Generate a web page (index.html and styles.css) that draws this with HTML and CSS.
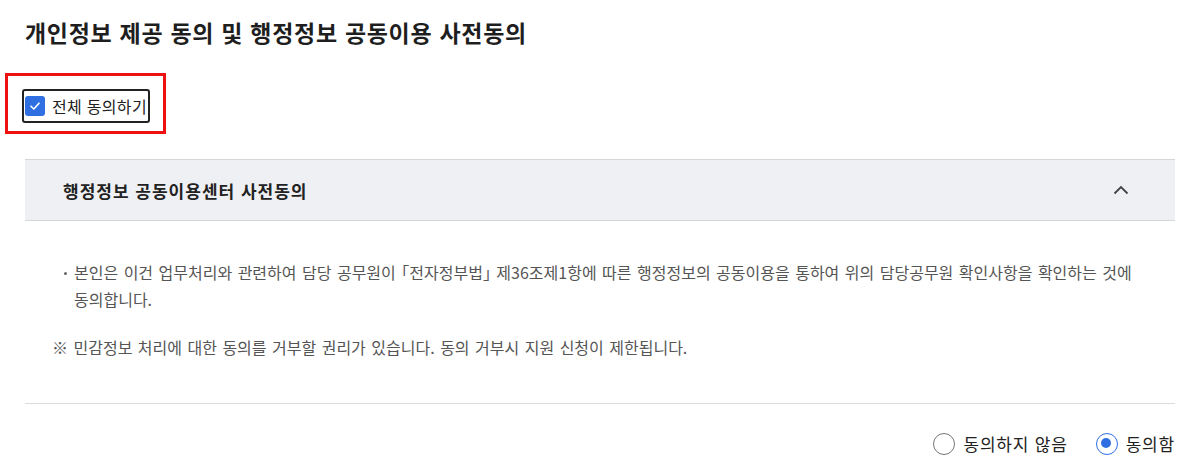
FILE: index.html
```html
<!DOCTYPE html>
<html lang="ko">

<head>
  <meta charset="UTF-8">
  <title>개인정보 제공 동의</title>
  <link rel="stylesheet" href="styles.css">
</head>

<body>

  <div class="page">
    <h1 class="title">개인정보 제공 동의 및 행정정보 공동이용 사전동의</h1>

    <div class="all-agree-mark">
      <label class="all-agree">
        <span class="check-box">
          <svg width="14" height="14" viewBox="0 0 14 14">
            <path d="M3 7.2 L5.8 10 L11 4.2" fill="none" stroke="#fff" stroke-width="1.6" stroke-linecap="round" stroke-linejoin="round" />
          </svg>
        </span>
        전체 동의하기
      </label>
    </div>

    <div class="accordion">
      <div class="accordion-head">
        <span>행정정보 공동이용센터 사전동의</span>
        <svg class="chevron" width="16" height="10" viewBox="0 0 16 10">
          <path d="M1.5 8.5 L8 2 L14.5 8.5" fill="none" stroke="#444" stroke-width="1.8" />
        </svg>
      </div>

      <div class="accordion-body">
        <ul class="terms">
          <li>본인은 이건 업무처리와 관련하여 담당 공무원이 ｢전자정부법｣ 제36조제1항에 따른 행정정보의 공동이용을 통하여 위의 담당공무원 확인사항을 확인하는 것에 동의합니다.</li>
        </ul>
        <p class="notice">※ 민감정보 처리에 대한 동의를 거부할 권리가 있습니다. 동의 거부시 지원 신청이 제한됩니다.</p>
      </div>
    </div>

    <div class="choice">
      <label class="radio">
        <span class="radio-dot"></span>
        동의하지 않음
      </label>
      <label class="radio checked">
        <span class="radio-dot"></span>
        동의함
      </label>
    </div>
  </div>

</body>

</html>
```

FILE: styles.css
```css
body {
  margin: 0;
  font-family: "Noto Sans CJK KR", "Noto Sans", sans-serif;
  background-color: #fff;
  color: #1e1e1e;
}

.page {
  padding: 14px 25px 0 25px;
}

.title {
  margin: 0;
  font-size: 23px;
  font-weight: 700;
  line-height: 36px;
  letter-spacing: 0.7px;
}

.all-agree-mark {
  display: inline-block;
  margin: 23px 0 0 -20px;
  padding: 13px 13px 8px 14px;
  border: 3px solid #ee1111;
}

.all-agree {
  display: flex;
  align-items: center;
  gap: 7px;
  padding: 3px 1px 3px 1px;
  border: 2px solid #222;
  border-radius: 3px;
  font-size: 16px;
  letter-spacing: 0.3px;
  color: #222;
}

.check-box {
  display: flex;
  align-items: center;
  justify-content: center;
  width: 20px;
  height: 20px;
  border-radius: 3px;
  background-color: #2f6fe2;
}

.accordion {
  margin-top: 25px;
}

.accordion-head {
  display: flex;
  align-items: center;
  justify-content: space-between;
  height: 60px;
  padding: 0 46px 0 38px;
  background-color: #eef0f3;
  border-top: 1px solid #d4d6d9;
  border-bottom: 1px solid #d4d6d9;
  font-size: 17px;
  font-weight: 700;
  letter-spacing: 1px;
  color: #222;
}

.accordion-body {
  padding: 38px 0 42px 0;
  border-bottom: 1px solid #dcdcdc;
}

.terms {
  margin: 0;
  padding: 0 40px 0 49px;
  list-style: none;
}

.terms li {
  position: relative;
  font-size: 16px;
  line-height: 27px;
  word-spacing: 1px;
  color: #555;
}

.terms li::before {
  content: "";
  position: absolute;
  left: -10px;
  top: 13px;
  width: 3px;
  height: 3px;
  border-radius: 50%;
  background-color: #666;
}

.notice {
  margin: 21px 0 0 27px;
  font-size: 16px;
  line-height: 27px;
  word-spacing: 1px;
  color: #555;
}

.choice {
  display: flex;
  justify-content: flex-end;
  gap: 28px;
  padding-top: 27px;
}

.radio {
  display: flex;
  align-items: center;
  gap: 8px;
  font-size: 17px;
  letter-spacing: 0.8px;
  color: #222;
}

.radio-dot {
  position: relative;
  width: 22px;
  height: 22px;
  box-sizing: border-box;
  border: 1.5px solid #777;
  border-radius: 50%;
}

.radio.checked .radio-dot {
  border-color: #2f6fe2;
}

.radio.checked .radio-dot::after {
  content: "";
  position: absolute;
  top: 4.5px;
  left: 4.5px;
  width: 10px;
  height: 10px;
  border-radius: 50%;
  background-color: #2f6fe2;
}
```
